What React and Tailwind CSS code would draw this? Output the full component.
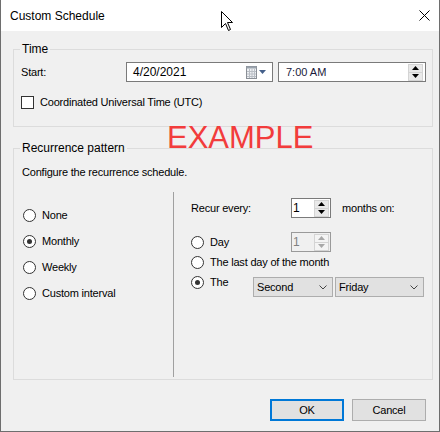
import React from 'react'

const Radio = ({ checked }) => (
    <span className="w-[13px] h-[13px] shrink-0 rounded-full border border-[#333] bg-white flex items-center justify-center">
        {checked && <span className="w-[5px] h-[5px] rounded-full bg-[#333]" />}
    </span>
)

const UpArrow = ({ color }) => (
    <svg width="7" height="4" viewBox="0 0 7 4"><path d="M3.5 0 L7 4 L0 4 Z" fill={color} /></svg>
)

const DownArrow = ({ color }) => (
    <svg width="7" height="4" viewBox="0 0 7 4"><path d="M0 0 L7 0 L3.5 4 Z" fill={color} /></svg>
)

const SpinButtons = ({ disabled }) => (
    <div className="flex flex-col w-[15px] h-[17px] border border-[#d4d4d4]">
        <div className={"flex-1 flex items-center justify-center border-b border-[#d4d4d4] " + (disabled ? 'bg-[#f4f4f4]' : 'bg-[#e9e9e9]')}>
            <UpArrow color={disabled ? '#a8a8a8' : '#000'} />
        </div>
        <div className={"flex-1 flex items-center justify-center " + (disabled ? 'bg-[#f4f4f4]' : 'bg-[#e9e9e9]')}>
            <DownArrow color={disabled ? '#a8a8a8' : '#000'} />
        </div>
    </div>
)

const Spinner = ({ value, disabled }) => (
    <div className={"w-[40px] h-[20px] flex items-center justify-between pl-[1px] pr-[1px] border text-[12px] " + (disabled ? 'border-[#9a9a9a] bg-[#f0f0f0] text-[#808080]' : 'border-[#7a7a7a] bg-white text-black')}>
        <span className="leading-[16px]">{value}</span>
        <SpinButtons disabled={disabled} />
    </div>
)

const Combo = ({ label, width }) => (
    <div className={"h-[20px] flex items-center justify-between pl-[3px] pr-[5px] bg-[#e1e1e1] border border-[#adadad] " + width}>
        <span>{label}</span>
        <svg width="8" height="5" viewBox="0 0 8 5">
            <polyline points="0.5,0.5 4,4 7.5,0.5" fill="none" stroke="#444" strokeWidth="1" />
        </svg>
    </div>
)

export default function App() {
    return (
        <div className="relative w-[440px] h-[432px] bg-[#f0f0f0] border-l border-r border-b border-[#6e6e6e] text-[11px] tracking-[-0.2px] leading-[16px] text-black overflow-hidden" style={{ fontFamily: '"Liberation Sans", Arial, sans-serif' }}>
            {/* title bar */}
            <div className="h-[31px] bg-white flex items-center justify-between pl-[9px] pr-[9px]">
                <span className="text-[12px] tracking-normal">Custom Schedule</span>
                <svg width="11" height="11" viewBox="0 0 11 11">
                    <path d="M0.5 0.5 L10.5 10.5 M10.5 0.5 L0.5 10.5" stroke="#000" strokeWidth="1" />
                </svg>
            </div>

            <div className="pl-[12px] pt-[10px]">
                {/* Time group */}
                <fieldset className="w-[420px] border border-[#dcdcdc] pb-[16px]">
                    <legend className="ml-[6px] px-[2px] text-[12px] tracking-normal">Time</legend>
                    <div className="flex items-center mt-[5px] pl-[7px]">
                        <span className="w-[105px]">Start:</span>
                        <div className="w-[147px] h-[20px] border border-[#7a7a7a] bg-white flex items-center justify-between pl-[6px] pr-[6px]">
                            <span className="text-[12px] tracking-normal">4/20/2021</span>
                            <div className="flex items-center gap-[2px]">
                                <svg width="11" height="13" viewBox="0 0 11 13">
                                    <rect x="0.5" y="0.5" width="10" height="12" fill="#eef0f3" stroke="#8a8f96" />
                                    <rect x="0.5" y="0.5" width="10" height="2" fill="#9aa3ad" />
                                    <path d="M1 5.5 H10 M1 8 H10 M1 10.5 H10 M3.5 3 V12 M6 3 V12 M8.5 3 V12" stroke="#b9bec5" strokeWidth="1" />
                                </svg>
                                <svg width="7" height="4" viewBox="0 0 7 4"><path d="M0 0 L7 0 L3.5 4 Z" fill="#44608a" /></svg>
                            </div>
                        </div>
                        <div className="ml-[5px] w-[148px] h-[20px] border border-[#7a7a7a] bg-white flex items-center justify-between pl-[7px] pr-[2px]">
                            <span className="text-[#1a1a3a] tracking-normal">7:00 AM</span>
                            <SpinButtons />
                        </div>
                    </div>
                    <div className="flex items-center h-[16px] mt-[12px] pl-[7px]">
                        <span className="w-[13px] h-[13px] border border-[#333] bg-white" />
                        <span className="ml-[6px]">Coordinated Universal Time (UTC)</span>
                    </div>
                </fieldset>

                {/* Recurrence group */}
                <fieldset className="w-[420px] mt-[13px] border border-[#dcdcdc] pb-[2px]">
                    <legend className="ml-[6px] px-[2px] text-[12px] tracking-normal">Recurrence pattern</legend>
                    <div className="mt-[8px] pl-[8px]">Configure the recurrence schedule.</div>
                    <div className="flex mt-[12px] h-[185px]">
                        <div className="w-[159px] flex flex-col gap-[10px] pt-[15px] pl-[9px]">
                            <label className="flex items-center gap-[6px] h-[16px]"><Radio />None</label>
                            <label className="flex items-center gap-[6px] h-[16px]"><Radio checked />Monthly</label>
                            <label className="flex items-center gap-[6px] h-[16px]"><Radio />Weekly</label>
                            <label className="flex items-center gap-[6px] h-[16px]"><Radio />Custom interval</label>
                        </div>
                        <div className="w-px bg-[#a0a0a0]" />
                        <div className="flex-1 flex flex-col pl-[17px] pt-[6px]">
                            <div className="flex items-center h-[20px]">
                                <span className="w-[100px]">Recur every:</span>
                                <Spinner value="1" />
                                <span className="ml-[11px]">months on:</span>
                            </div>
                            <div className="flex items-center h-[20px] mt-[14px]">
                                <label className="w-[100px] flex items-center gap-[6px]"><Radio />Day</label>
                                <Spinner value="1" disabled />
                            </div>
                            <label className="flex items-center gap-[6px] h-[16px] mt-[2px]"><Radio />The last day of the month</label>
                            <div className="flex items-start">
                                <label className="w-[62px] flex items-center gap-[6px] h-[16px] mt-[4px]"><Radio checked />The</label>
                                <div className="flex gap-[2px] mt-[7px]">
                                    <Combo label="Second" width="w-[80px]" />
                                    <Combo label="Friday" width="w-[89px]" />
                                </div>
                            </div>
                        </div>
                    </div>
                </fieldset>

                {/* buttons */}
                <div className="flex justify-end gap-[8px] mt-[19px] pr-[13px]">
                    <button className="w-[74px] h-[22px] bg-[#e1e1e1] border-2 border-[#0078d7]">OK</button>
                    <button className="w-[74px] h-[22px] bg-[#e1e1e1] border border-[#adadad]">Cancel</button>
                </div>
            </div>

            {/* watermark */}
            <div className="absolute left-[166px] top-[122px] text-[31px] leading-[31px] tracking-normal text-[#f23c3c] pointer-events-none">EXAMPLE</div>

            {/* mouse pointer */}
            <svg className="absolute left-[220px] top-[11px]" width="13" height="21" viewBox="0 0 13 21">
                <path d="M0.5 0.5 L0.5 16.5 L4.5 12.5 L7.5 19.5 L9.5 18.5 L6.5 11.5 L11.5 11.5 Z" fill="#fff" stroke="#000" strokeWidth="1" strokeLinejoin="round" />
            </svg>
        </div>
    )
}
